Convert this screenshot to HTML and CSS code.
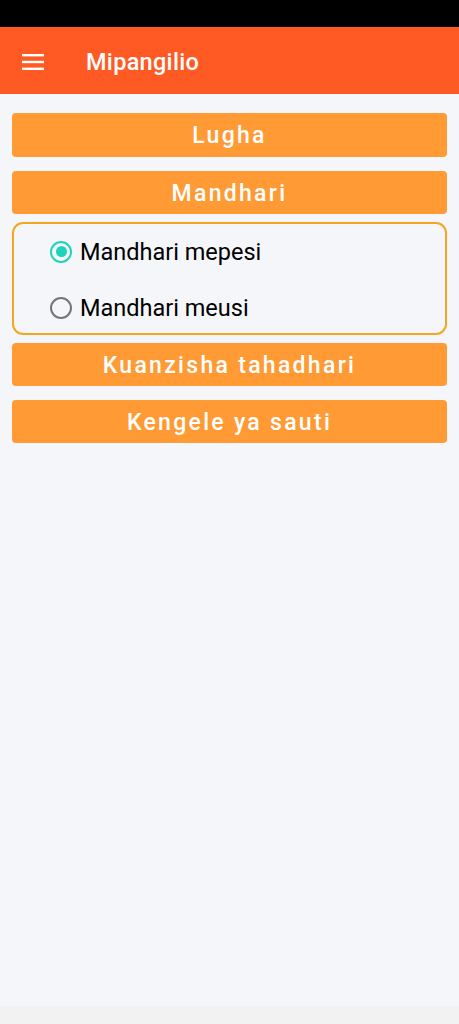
FILE: index.html
```html
<!DOCTYPE html>
<html lang="sw">
<head>
<meta charset="utf-8">
<title>Mipangilio</title>
<link rel="stylesheet" href="styles.css">
</head>
<body>
<div class="screen">
  <div class="status"></div>
  <header class="appbar">
    <svg class="menu" width="22" height="18" viewBox="0 0 22 18" aria-hidden="true">
      <rect x="0" y="2" width="22" height="2.4" fill="#fff"/>
      <rect x="0" y="8.8" width="22" height="2.4" fill="#fff"/>
      <rect x="0" y="15.6" width="22" height="2.4" fill="#fff"/>
    </svg>
    <h1 class="title">Mipangilio</h1>
  </header>
  <main class="content">
    <button class="btn btn-lugha">Lugha</button>
    <button class="btn btn-mandhari">Mandhari</button>
    <div class="options">
      <label class="option">
        <span class="radio checked"></span>
        <span class="option-text">Mandhari mepesi</span>
      </label>
      <label class="option">
        <span class="radio"></span>
        <span class="option-text">Mandhari meusi</span>
      </label>
    </div>
    <button class="btn btn-kuanzisha">Kuanzisha tahadhari</button>
    <button class="btn btn-kengele">Kengele ya sauti</button>
  </main>
  <div class="navbar"></div>
</div>
</body>
</html>
```

FILE: styles.css
```css
html, body {
  margin: 0;
  padding: 0;
}
body {
  font-family: Roboto, "Noto Sans", "Liberation Sans", sans-serif;
  background: #f5f6fa;
}
.screen {
  width: 459px;
  height: 1024px;
  display: flex;
  flex-direction: column;
  overflow: hidden;
}
.status {
  height: 27px;
  background: #000;
  flex: none;
}
.appbar {
  height: 67px;
  flex: none;
  background: #ff5a24;
  display: flex;
  align-items: center;
  padding-left: 22px;
  box-sizing: border-box;
}
.menu {
  display: block;
  margin-top: 1px;
}
.title {
  margin: 3px 0 0 42px;
  color: #fff;
  font-size: 23.5px;
  font-weight: 500;
  letter-spacing: 0.3px;
}
.content {
  flex: 1;
  padding: 19px 12px 0 12px;
  display: flex;
  flex-direction: column;
  background: #f5f6fa;
}
.btn {
  display: block;
  width: 100%;
  height: 44px;
  border: none;
  border-radius: 4px;
  background: #ff9a35;
  color: #fff;
  font-family: Roboto, "Noto Sans", "Liberation Sans", sans-serif;
  font-size: 23px;
  font-weight: 500;
  letter-spacing: 0.1em;
  padding: 1px 0 0 0;
  flex: none;
}
.btn-mandhari {
  margin-top: 14px;
  height: 43px;
}
.options {
  margin-top: 8px;
  border: 2px solid #f3a61f;
  border-radius: 11px;
  display: flex;
  flex-direction: column;
  gap: 4px;
  padding: 1px 0 0 36px;
  height: 113px;
  box-sizing: border-box;
}
.option {
  height: 53px;
  display: flex;
  align-items: center;
  gap: 8px;
  flex: none;
}
.option + .option {
  height: 51px;
}
.radio {
  width: 22px;
  height: 22px;
  border-radius: 50%;
  border: 2px solid #757575;
  box-sizing: border-box;
  display: flex;
  align-items: center;
  justify-content: center;
  flex: none;
}
.radio.checked {
  border-color: #1dd3bd;
}
.radio.checked::after {
  content: "";
  width: 11px;
  height: 11px;
  border-radius: 50%;
  background: #1dd3bd;
}
.option-text {
  font-size: 23.5px;
  color: #000;
}
.btn-kuanzisha {
  margin-top: 8px;
  height: 43px;
}
.btn-kengele {
  margin-top: 14px;
  height: 43px;
}
.navbar {
  height: 18px;
  flex: none;
  background: #f2f2f2;
}
```
